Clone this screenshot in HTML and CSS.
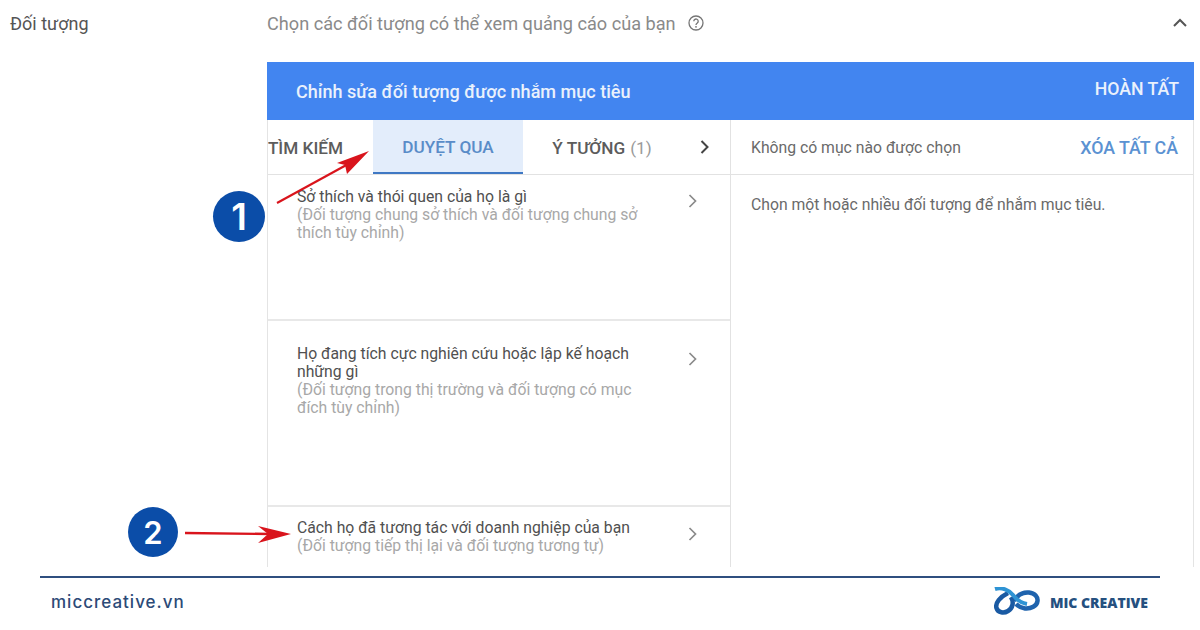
FILE: index.html
```html
<!DOCTYPE html>
<html lang="vi">
<head>
    <meta charset="UTF-8">
    <title>Đối tượng</title>
    <link rel="stylesheet" href="styles.css">
</head>
<body>
<div class="page">
    <div class="top-row">
        <div class="top-label">Đối tượng</div>
        <div class="top-hint">
            <span>Chọn các đối tượng có thể xem quảng cáo của bạn</span>
            <svg class="help-icon" width="18" height="18" viewBox="0 0 18 18">
                <circle cx="9" cy="9" r="7" fill="none" stroke="#757575" stroke-width="1.3"/>
                <path d="M6.8 7.2a2.2 2.2 0 1 1 3.5 1.8c-.8.6-1.3 1-1.3 2" fill="none" stroke="#757575" stroke-width="1.3"/>
                <circle cx="9" cy="12.8" r=".9" fill="#757575"/>
            </svg>
        </div>
        <svg class="collapse-icon" width="16" height="10" viewBox="0 0 16 10">
            <path d="M2 8l6-6 6 6" fill="none" stroke="#555" stroke-width="2"/>
        </svg>
    </div>

    <div class="editor">
        <div class="editor-head">
            <span class="editor-title">Chỉnh sửa đối tượng được nhắm mục tiêu</span>
            <span class="editor-done">HOÀN TẤT</span>
        </div>
        <div class="editor-body">
            <div class="col-left">
                <div class="tabs">
                    <div class="tab tab-first">TÌM KIẾM</div>
                    <div class="tab tab-active">DUYỆT QUA</div>
                    <div class="tab tab-ideas">Ý TƯỞNG <span class="tab-count">(1)</span></div>
                    <svg class="tab-next" width="12" height="16" viewBox="0 0 12 16">
                        <path d="M2.5 2l6 6-6 6" fill="none" stroke="#444" stroke-width="2"/>
                    </svg>
                </div>
                <div class="item item-one">
                    <div class="item-text">
                        <div class="item-title">Sở thích và thói quen của họ là gì</div>
                        <div class="item-sub">(Đối tượng chung sở thích và đối tượng chung sở thích tùy chỉnh)</div>
                    </div>
                    <svg class="item-arrow" width="12" height="16" viewBox="0 0 12 16">
                        <path d="M2.5 2l6 6-6 6" fill="none" stroke="#8a8a8a" stroke-width="1.7"/>
                    </svg>
                </div>
                <div class="item item-two">
                    <div class="item-text">
                        <div class="item-title">Họ đang tích cực nghiên cứu hoặc lập kế hoạch những gì</div>
                        <div class="item-sub">(Đối tượng trong thị trường và đối tượng có mục đích tùy chỉnh)</div>
                    </div>
                    <svg class="item-arrow" width="12" height="16" viewBox="0 0 12 16">
                        <path d="M2.5 2l6 6-6 6" fill="none" stroke="#8a8a8a" stroke-width="1.7"/>
                    </svg>
                </div>
                <div class="item item-three">
                    <div class="item-text">
                        <div class="item-title">Cách họ đã tương tác với doanh nghiệp của bạn</div>
                        <div class="item-sub">(Đối tượng tiếp thị lại và đối tượng tương tự)</div>
                    </div>
                    <svg class="item-arrow" width="12" height="16" viewBox="0 0 12 16">
                        <path d="M2.5 2l6 6-6 6" fill="none" stroke="#8a8a8a" stroke-width="1.7"/>
                    </svg>
                </div>
            </div>
            <div class="col-right">
                <div class="selected-head">
                    <span>Không có mục nào được chọn</span>
                    <span class="clear-all">XÓA TẤT CẢ</span>
                </div>
                <div class="selected-empty">Chọn một hoặc nhiều đối tượng để nhắm mục tiêu.</div>
            </div>
        </div>
    </div>

    <div class="footer">
        <span class="footer-site">miccreative.vn</span>
        <div class="footer-brand">
            <svg width="47" height="30" viewBox="0 0 47 30">
                <path d="M20 14C24 7 30 5 35 5.5 41 6 44 10 43.5 14 43 19 37 22 31 21.5 27 21 24 19 22 17" fill="none" stroke="#1f63ad" stroke-width="4.5"/>
                <path d="M14 6C6 10 1 16 2.5 21 4 26 10 26.5 14 24 19 21 20 15 17 10" fill="none" stroke="#1a5aa3" stroke-width="4.5"/>
                <path d="M1 2C8 0 15 3 19 8 23 13 27 16 33 17" fill="none" stroke="#2e93d4" stroke-width="4"/>
            </svg>
            <span class="footer-name">MIC CREATIVE</span>
        </div>
    </div>

    <!-- chu thich mui ten + so -->
    <div class="badge badge-one">1</div>
    <div class="badge badge-two">2</div>
    <svg class="arrows" width="1200" height="630" viewBox="0 0 1200 630">
        <path d="M277 203L350 163" stroke="#d9141c" stroke-width="2.2" fill="none"/>
        <path d="M369 151L337 163 345 165 347 174z" fill="#d9141c"/>
        <path d="M185 533L270 534" stroke="#d9141c" stroke-width="2.4" fill="none"/>
        <path d="M291 534L258 526 268 534 258 543z" fill="#d9141c"/>
    </svg>
</div>
</body>
</html>
```

FILE: styles.css
```css
* {
    box-sizing: border-box;
}

body {
    margin: 0;
    background: #fff;
    font-family: Roboto, "Liberation Sans", sans-serif;
    color: #444;
}

.page {
    position: relative;
    width: 1200px;
    height: 630px;
    overflow: hidden;
}

.top-row {
    display: flex;
    align-items: center;
    height: 46px;
    font-size: 18px;
}

.top-label {
    width: 267px;
    padding-left: 10px;
    color: #555;
}

.top-hint {
    display: flex;
    align-items: center;
    gap: 11px;
    flex: 1;
    color: #8a8a8a;
    font-size: 18.15px;
}

.collapse-icon {
    margin-right: 12px;
}

.editor {
    margin: 16px 6px 0 267px;
    height: 505px;
    border-right: 1px solid #e4e4e4;
    border-left: 1px solid #e4e4e4;
    display: flex;
    flex-direction: column;
}

.editor-head {
    display: flex;
    align-items: center;
    justify-content: space-between;
    height: 58px;
    margin: 0 -1px;
    padding: 0 15px 0 29px;
    background: #4285f0;
    color: #eaf1fc;
    font-weight: 500;
}

.editor-title {
    font-size: 18.05px;
}

.editor-done {
    font-size: 17.7px;
    margin-top: -4px;
}

.editor-body {
    display: flex;
    flex: 1;
    min-height: 0;
}

.col-left {
    width: 463px;
    border-right: 1px solid #e2e2e2;
    display: flex;
    flex-direction: column;
}

.tabs {
    display: flex;
    align-items: center;
    height: 55px;
    border-bottom: 1px solid #e2e2e2;
    font-size: 17.2px;
    font-weight: 500;
    color: #5c5c5c;
}

.tab {
    display: flex;
    align-items: center;
    justify-content: center;
    height: 100%;
    padding-top: 2px;
}

.tab-first {
    width: 105px;
    justify-content: flex-end;
    padding-right: 30px;
    white-space: nowrap;
    overflow: hidden;
}

.tab-active {
    width: 150px;
    background: #e3edfb;
    border-bottom: 2px solid #3f78c4;
    color: #5a8cc8;
}

.tab-ideas {
    width: 150px;
    padding-left: 8px;
    gap: 5px;
}

.tab-count {
    color: #9a9a9a;
    font-weight: 400;
}

.tab-next {
    margin-left: 26px;
}

.item {
    display: flex;
    justify-content: space-between;
    align-items: flex-start;
    padding: 13px 31px 0 29px;
    border-bottom: 2px solid #e8e8e8;
}

.item-one {
    height: 146px;
}

.item-two {
    height: 186px;
    padding-top: 24px;
}

.item-three {
    flex: 1;
    border-bottom: none;
    padding-top: 12px;
}

.item-text {
    width: 350px;
    font-size: 15.75px;
    line-height: 18px;
}

.item-title {
    color: #505050;
}

.item-sub {
    color: #a8a8a8;
}

.item-arrow {
    margin-top: 5px;
}

.item-two .item-arrow {
    margin-top: 6px;
}

.item-three .item-arrow {
    margin-top: 7px;
}

.col-right {
    flex: 1;
    display: flex;
    flex-direction: column;
    font-size: 15.75px;
    color: #6a6a6a;
}

.selected-head {
    display: flex;
    align-items: center;
    justify-content: space-between;
    height: 55px;
    padding: 0 15px 0 20px;
    border-bottom: 1px solid #e2e2e2;
}

.clear-all {
    color: #5b92d2;
    font-size: 17.8px;
    font-weight: 500;
}

.selected-empty {
    padding: 21px 20px 0;
    line-height: 18px;
}

.footer {
    display: flex;
    align-items: center;
    justify-content: space-between;
    margin: 9px 40px 0;
    height: 50px;
    border-top: 2px solid #2f4f7f;
    padding: 0 12px 0 11px;
}

.footer-site {
    font-family: Inter, "Open Sans", sans-serif;
    font-size: 17px;
    font-weight: 500;
    letter-spacing: 1px;
    color: #2c4a77;
}

.footer-brand {
    display: flex;
    align-items: center;
    gap: 9px;
}

.footer-name {
    font-family: "Open Sans", sans-serif;
    font-size: 14px;
    font-weight: 800;
    color: #25507f;
}

.badge {
    position: absolute;
    display: flex;
    align-items: center;
    justify-content: center;
    border-radius: 50%;
    background: #0b4da8;
    color: #fff;
    font-family: Inter, "Open Sans", sans-serif;
    font-weight: 600;
}

.badge-one {
    left: 213px;
    top: 191px;
    width: 52px;
    height: 51px;
    font-size: 37px;
}

.badge-two {
    left: 128px;
    top: 507px;
    width: 50px;
    height: 50px;
    font-size: 31px;
}

.arrows {
    position: absolute;
    left: 0;
    top: 0;
    pointer-events: none;
}
```
